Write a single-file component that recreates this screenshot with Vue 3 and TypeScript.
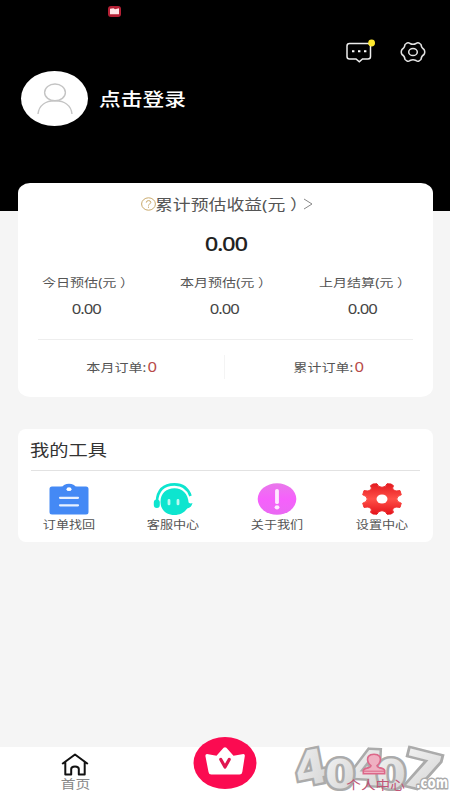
<script setup lang="ts">
interface Stat {
  label: string
  value: string
}

const stats: Stat[] = [
  { label: '今日预估(元 ）', value: '0.00' },
  { label: '本月预估(元 ）', value: '0.00' },
  { label: '上月结算(元 ）', value: '0.00' },
]

const orders: Stat[] = [
  { label: '本月订单:', value: '0' },
  { label: '累计订单:', value: '0' },
]

const tools: { id: string; label: string }[] = [
  { id: 'order', label: '订单找回' },
  { id: 'service', label: '客服中心' },
  { id: 'about', label: '关于我们' },
  { id: 'settings', label: '设置中心' },
]
</script>

<template>
  <div class="page">
    <header class="hero">
      <svg class="status" width="13" height="11" viewBox="0 0 13 11">
        <rect width="13" height="11" rx="3" fill="#b52035" />
        <path d="M2 2.8 L5.5 2.3 L7 3.3 L11 2.3 V8.3 H2Z" fill="#ffe6e8" />
      </svg>
      <div class="actions">
        <svg width="32" height="26" viewBox="0 0 32 26" fill="none">
          <path d="M4.5 4.5 H23 Q25.5 4.5 25.5 7 V17.5 Q25.5 20 23 20 H17.5 L14.3 22.8 L11 20 H4.5 Q2 20 2 17.5 V7 Q2 4.5 4.5 4.5Z" stroke="#eee" stroke-width="1.5" />
          <path d="M7 12.3h2.4M13 12.3h2.4M19 12.3h2.4" stroke="#fff" stroke-width="2" />
          <circle cx="26.6" cy="4" r="3.4" fill="#ffe92e" />
        </svg>
        <svg width="26" height="22" viewBox="0 0 26 22" fill="none" stroke="#e4e4e4" stroke-width="1.5" stroke-linejoin="round">
          <path d="M7 2 Q8.5 1.2 10 2.5 Q13 4.2 16 2.5 Q17.5 1.2 19 2 L21 3.5 Q21.3 7 24 8.5 Q25.5 11 24 13.5 Q21.3 15 21 18.5 L19 20 Q17.5 20.8 16 19.5 Q13 17.8 10 19.5 Q8.5 20.8 7 20 L5 18.5 Q4.7 15 2 13.5 Q.5 11 2 8.5 Q4.7 7 5 3.5Z" />
          <ellipse cx="13" cy="11" rx="4.3" ry="3.6" />
        </svg>
      </div>
      <div class="user">
        <div class="avatar">
          <svg width="38" height="32" viewBox="0 0 38 32" fill="none" stroke="#c4c4c4" stroke-width="1.4">
            <ellipse cx="19" cy="9.4" rx="10.4" ry="8.4" />
            <path d="M2 31 C3 22 10 17.8 19 17.8 C28 17.8 35 22 36 31" />
          </svg>
        </div>
        <span class="wide login">点击登录</span>
      </div>
    </header>

    <section class="card income">
      <div class="income-title">
        <svg width="15" height="14" viewBox="0 0 15 14" fill="none" stroke="#c9a96b" stroke-width="1">
          <ellipse cx="7.5" cy="7" rx="6.9" ry="6.2" />
          <path d="M5.3 5.6 Q5.3 3.6 7.5 3.6 Q9.8 3.6 9.8 5.4 Q9.8 6.4 8.5 7 Q7.5 7.5 7.5 8.6 M7.5 9.6v1.2" />
        </svg>
        <span class="wide title-text">累计预估收益(元 ）</span>
        <svg width="10" height="12" viewBox="0 0 10 12" fill="none" stroke="#888" stroke-width="1">
          <path d="M1 1 L9 6 L1 11" />
        </svg>
      </div>
      <div class="total"><span class="wide">0.00</span></div>
      <div class="stats">
        <div v-for="s in stats" :key="s.label" class="stat">
          <span class="wide stat-label">{{ s.label }}</span>
          <span class="wide stat-value">{{ s.value }}</span>
        </div>
      </div>
      <div class="orders">
        <div v-for="o in orders" :key="o.label" class="order">
          <span class="wide order-text">{{ o.label }}<b>{{ o.value }}</b></span>
        </div>
      </div>
    </section>

    <section class="card tools">
      <h2><span class="wide">我的工具</span></h2>
      <div class="tool-grid">
        <div v-for="t in tools" :key="t.id" class="tool">
          <svg v-if="t.id === 'order'" width="40" height="32" viewBox="0 0 40 32">
            <path d="M3 3.5 H12 Q14 3.5 15 2 Q20 -.6 25 2 Q26 3.5 28 3.5 H37 Q39.5 3.5 39.5 6 V29 Q39.5 31.5 37 31.5 H3 Q.5 31.5 .5 29 V6 Q.5 3.5 3 3.5Z" fill="#4489f5" />
            <ellipse cx="20" cy="6.2" rx="2.5" ry="1.9" fill="#fff" />
            <path d="M11 14.8h18M11 22.3h18" stroke="#e8f1ff" stroke-width="2.2" stroke-linecap="round" />
          </svg>
          <svg v-else-if="t.id === 'service'" width="40" height="32" viewBox="0 0 40 32" fill="#0de5cf">
            <path d="M3.8 19 C4.5 7 11 1.4 21.5 1.4 C29 1.4 35 5.5 37.5 13" fill="none" stroke="#0de5cf" stroke-width="2.6" />
            <rect x=".8" y="16.5" width="6" height="8.5" rx="3" />
            <path d="M7.5 19 C7.5 10 13.5 5.2 21.5 5.2 C29.5 5.2 35.2 11 35.6 19.5 Q37.5 21 39.5 20 Q38.5 24.5 34.2 25.5 C31 30 26.5 32 21.5 32 C13.5 32 7.5 27 7.5 19Z" />
            <path d="M16 17.5v3.4M25 17.5v3.4" stroke="#baf9f1" stroke-width="2.8" stroke-linecap="round" />
          </svg>
          <svg v-else-if="t.id === 'about'" width="40" height="32" viewBox="0 0 40 32">
            <defs>
              <linearGradient id="pink" x1="0" y1="0" x2="0" y2="1">
                <stop offset="0" stop-color="#e879ea" />
                <stop offset=".5" stop-color="#f660fc" />
                <stop offset="1" stop-color="#e969f2" />
              </linearGradient>
            </defs>
            <ellipse cx="20" cy="16" rx="19.3" ry="15.8" fill="url(#pink)" />
            <path d="M20 7.8v11.4" stroke="#ffe8ff" stroke-width="3.8" stroke-linecap="round" />
            <ellipse cx="20" cy="24.3" rx="2.4" ry="2.1" fill="#ffe8ff" />
          </svg>
          <svg v-else width="40" height="32" viewBox="0 0 40 32">
            <defs>
              <linearGradient id="red" x1="0" y1="0" x2="0" y2="1">
                <stop offset="0" stop-color="#e41b20" />
                <stop offset=".5" stop-color="#ff5048" />
                <stop offset="1" stop-color="#e5141b" />
              </linearGradient>
            </defs>
            <path fill="url(#red)" stroke="url(#red)" stroke-width="1" stroke-linejoin="round" d="M11 1 L15 .8 Q16 4.3 20 4.3 Q24 4.3 25 .8 L29 1 L31.5 2.7 Q29.8 5.2 31.3 6.8 Q33.4 8.8 38 7.6 L39.3 11.8 Q34.8 13 34.8 16 Q34.8 19 39.3 20.2 L38 24.4 Q33.4 23.2 31.3 25.2 Q29.8 26.8 31.5 29.3 L29 31 L25 31.2 Q24 27.7 20 27.7 Q16 27.7 15 31.2 L11 31 L8.5 29.3 Q10.2 26.8 8.7 25.2 Q6.6 23.2 2 24.4 L.7 20.2 Q5.2 19 5.2 16 Q5.2 13 .7 11.8 L2 7.6 Q6.6 8.8 8.7 6.8 Q10.2 5.2 8.5 2.7Z" />
            <ellipse cx="20" cy="16" rx="5.5" ry="4.5" fill="#fff" />
          </svg>
          <span class="wide tool-label">{{ t.label }}</span>
        </div>
      </div>
    </section>

    <nav class="tabbar">
      <div class="tab">
        <svg width="28" height="23" viewBox="0 0 28 23" fill="none" stroke="#111" stroke-width="2" stroke-linejoin="round" stroke-linecap="round">
          <path d="M1.8 10.5 L14 1.5 L26.2 10.5 M4.3 9 V21.5 H10.2 V16 Q10.2 13.5 14 13.5 Q17.8 13.5 17.8 16 V21.5 H23.7 V9" />
        </svg>
        <span class="wide home-label">首页</span>
      </div>
      <div class="tab vip">
        <svg width="64" height="54" viewBox="0 0 64 54">
          <ellipse cx="32" cy="27" rx="31.5" ry="26" fill="#fb0b51" />
          <path d="M14 18 L23.5 19.8 L30.6 11.8 Q32 10.6 33.4 11.8 L40.5 19.8 L50.5 18 Q52 18 51.8 20 L49.3 36 Q49 38.5 46.5 38.5 H18.3 Q15.8 38.5 15.5 36 L12.4 20 Q12.3 18 14 18Z" fill="#fff" />
          <path d="M27.8 23.5 L32 31 L36.2 23.5" fill="none" stroke="#e01550" stroke-width="3.2" stroke-linecap="round" stroke-linejoin="round" />
        </svg>
      </div>
      <div class="tab me">
        <svg width="24" height="23" viewBox="0 0 24 23">
          <path d="M12 1.2 C6.5 1.2 5 4.5 5.8 8 Q6.5 11 9 12.6 Q9 14 7 14.6 Q2 15.5 1.3 17.5 V20.8 H22.7 V17.5 Q22 15.5 17 14.6 Q15 14 15 12.6 Q17.5 11 18.2 8 C19 4.5 17.5 1.2 12 1.2Z" fill="#efb0c2" stroke="#dc6789" stroke-width="1.6" />
          <path d="M2 18.2h20" stroke="#dc6789" stroke-width="1" />
        </svg>
        <span class="wide me-label">个人中心</span>
      </div>
    </nav>

    <svg class="watermark" width="165" height="62" viewBox="0 0 165 62">
      <defs>
        <linearGradient id="silver" x1="0" y1="0" x2="1" y2="1">
          <stop offset="0" stop-color="#f4f4f4" />
          <stop offset="1" stop-color="#d2d2d2" />
        </linearGradient>
      </defs>
      <g class="digits">
        <text transform="translate(13 49) rotate(-11)" font-size="47" textLength="33" lengthAdjust="spacingAndGlyphs">4</text>
        <text transform="translate(66 46) rotate(3)" font-size="48" textLength="34" lengthAdjust="spacingAndGlyphs">4</text>
        <text transform="translate(40 49.5)" font-size="39" textLength="30" lengthAdjust="spacingAndGlyphs">0</text>
        <text transform="translate(91 50)" font-size="39" textLength="30" lengthAdjust="spacingAndGlyphs">0</text>
        <text transform="translate(113 45) rotate(14)" font-size="50" textLength="40" lengthAdjust="spacingAndGlyphs">7</text>
      </g>
      <text class="com" x="131" y="49.5" font-size="15" textLength="32" lengthAdjust="spacingAndGlyphs">.com</text>
    </svg>
  </div>
</template>

<style>
body {
  margin: 0;
}
</style>

<style scoped>
.page {
  position: relative;
  box-sizing: border-box;
  width: 450px;
  height: 800px;
  overflow: hidden;
  display: flex;
  flex-direction: column;
  background: #f5f5f5;
  color: #555;
  font-family: 'Noto Sans', 'Noto Sans CJK SC', sans-serif;
}
svg {
  display: block;
  flex: none;
}
.wide {
  display: inline-block;
  white-space: pre;
  transform: scaleX(1.19);
}
.hero {
  flex: none;
  height: 211px;
  background: #000;
}
.status {
  margin: 0 0 0 108px;
  padding-top: 6px;
}
.actions {
  display: flex;
  justify-content: flex-end;
  align-items: center;
  gap: 23px;
  height: 28px;
  margin-top: 21px;
  padding-right: 24px;
}
.user {
  display: flex;
  align-items: center;
  gap: 11px;
  margin: 5px 0 0 21px;
}
.avatar {
  box-sizing: border-box;
  display: flex;
  justify-content: center;
  align-items: center;
  width: 67px;
  height: 55px;
  border-radius: 50%;
  background: #fff;
}
.login {
  height: 26px;
  transform-origin: left;
  color: #fff;
  font: 500 18.3px/24px 'Noto Sans CJK SC', sans-serif;
}
.card {
  box-sizing: border-box;
  flex: none;
  width: 415px;
  margin-left: 18px;
  background: #fff;
}
.income {
  height: 214px;
  margin-top: -28px;
  border-radius: 12px / 10px;
}
.income-title {
  display: flex;
  align-items: center;
  height: 22px;
  padding: 10px 0 0 123px;
}
.title-text {
  width: 148px;
  margin-left: -1px;
  font-size: 15px;
  line-height: 22px;
  transform-origin: left;
}
.total {
  height: 30px;
  margin-top: 14px;
  text-align: center;
  color: #222;
  font: 500 20px/30px 'Noto Sans', sans-serif;
  letter-spacing: -1.1px;
}
.stats {
  display: grid;
  grid-template-columns: repeat(3, 138.3px);
  height: 67px;
  margin-top: 13px;
}
.stat {
  display: flex;
  flex-direction: column;
  align-items: center;
}
.stat-label {
  width: 70px;
  font-size: 11.8px;
  line-height: 20px;
  transform-origin: left;
  margin-left: -20px;
}
.stat-value {
  margin: 7px 2px 0 0;
  color: #444;
  font-size: 14px;
  line-height: 20px;
  letter-spacing: -0.8px;
}
.orders {
  display: flex;
  align-items: center;
  height: 54px;
  margin: 0 20px;
  border-top: 1px solid #eee;
}
.order {
  box-sizing: border-box;
  width: 186px;
  height: 24px;
  padding-right: 19px;
  text-align: center;
}
.order + .order {
  flex: 1;
  border-left: 1px solid #f4f4f4;
  padding: 0 0 0 20px;
}
.order-text {
  font-size: 11.8px;
  line-height: 24px;
}
.order-text b {
  margin-left: 1px;
  color: #b84a48;
  font-size: 14px;
  font-weight: 400;
}
.tools {
  height: 113px;
  margin-top: 32px;
  padding: 0 13px;
  border-radius: 8px;
}
h2 {
  height: 41px;
  margin: 0;
  border-bottom: 1px solid #e2e2e2;
  color: #333;
  font-size: 16.2px;
  font-weight: 400;
  line-height: 42px;
}
h2 .wide {
  margin-left: -1px;
  transform-origin: left;
}
.tool-grid {
  display: grid;
  grid-template-columns: repeat(4, 104.2px);
  margin: 12px -14px 0;
}
.tool {
  display: flex;
  flex-direction: column;
  align-items: center;
}
.tool-label {
  font-size: 11px;
  line-height: 20px;
}
.tabbar {
  display: grid;
  grid-template-columns: repeat(3, 150px);
  height: 53px;
  margin-top: auto;
  background: #fff;
}
.tab {
  display: flex;
  flex-direction: column;
  align-items: center;
}
.tab > svg {
  margin-top: 6px;
}
.home-label {
  color: #888;
  font-size: 12.4px;
  line-height: 18px;
}
.vip > svg {
  margin-top: -11px;
}
.me {
  position: relative;
  z-index: 1;
}
.me > svg {
  margin: 6px 2px 0 0;
}
.me-label {
  margin-left: 2px;
  color: #c05575;
  font-size: 12.3px;
  line-height: 20px;
}
.watermark {
  position: absolute;
  left: 285px;
  top: 738px;
}
.digits text,
.com {
  fill: url(#silver);
  stroke: #ababab;
  stroke-width: 5px;
  stroke-linejoin: round;
  paint-order: stroke;
  font-family: 'DejaVu Sans', sans-serif;
  font-weight: 700;
}
.digits text {
  stroke-linejoin: miter;
  stroke-miterlimit: 3;
}
.com {
  fill: #fff;
  stroke-width: 3px;
}
</style>
